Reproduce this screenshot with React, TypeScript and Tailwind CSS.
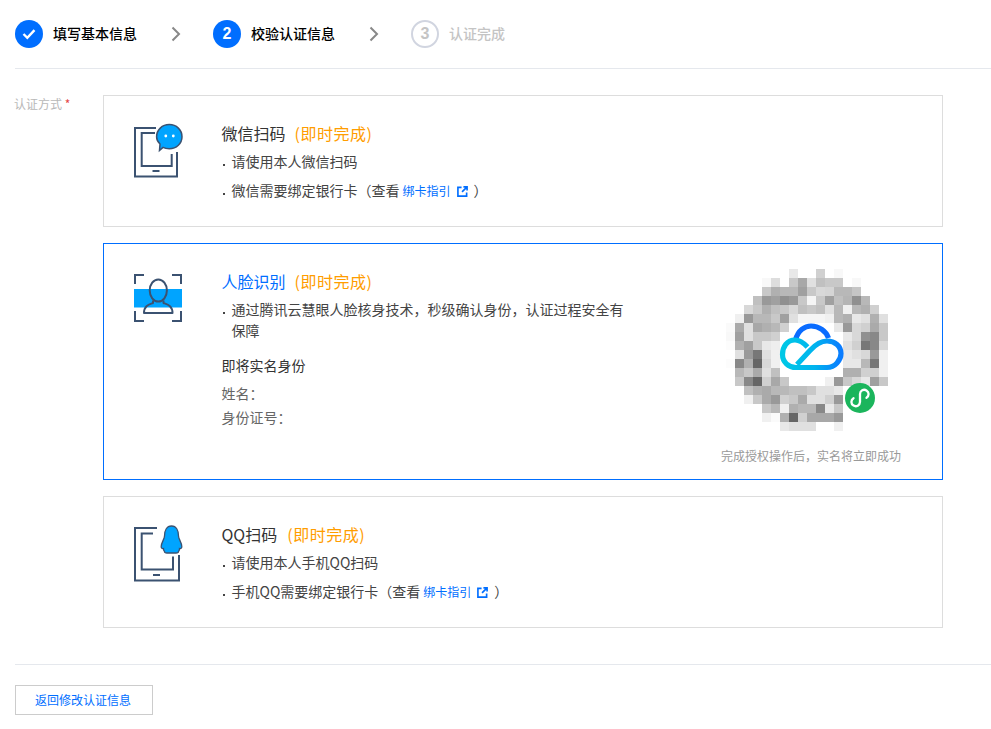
import React from "react";

const QR: string[] = [
  "-- -- -- -- -- -- -- e8 -- -- d0 -- f8 -- -- -- -- --",
  "-- -- -- -- f8 dd -- c8 a8 e0 c0 c8 c8 -- f8 -- -- --",
  "-- -- -- -- c8 b0 b8 b8 a0 c8 d8 d5 b8 b8 c5 -- -- --",
  "-- -- -- c0 99 a0 90 99 c8 f5 c8 a0 c0 b5 90 b8 -- --",
  "-- -- d8 c8 b0 c0 c8 d8 c0 c8 c0 e0 b8 f0 b8 b0 d0 --",
  "-- f0 99 b8 b8 c8 a0 e0 f5 f5 f5 f0 b8 b0 e8 e0 b0 e0",
  "fa aa e0 a8 b0 b8 d0 -- -- -- -- -- e8 99 d8 d0 aa c8",
  "f8 a0 e0 c8 c8 d0 -- -- -- -- -- -- -- e8 d8 90 88 c8",
  "fc b0 a0 c8 e8 ee -- -- -- -- -- -- -- e0 d0 77 88 d8",
  "-- e0 99 77 e0 f0 -- -- -- -- -- -- -- e8 e0 d8 99 f0",
  "fc 88 b0 66 d8 f0 -- -- -- -- -- -- -- e8 e8 b8 77 f0",
  "-- b8 c8 aa e0 c0 -- -- -- -- -- -- -- b0 b0 d0 d0 f0",
  "-- c8 88 66 d0 a8 c8 -- -- -- -- f0 99 c8 d8 e8 a0 c8",
  "-- -- c0 b0 aa b8 b8 c0 c0 c8 e0 e0 e8 -- -- -- -- --",
  "-- -- f0 c8 aa 99 d0 c8 aa e0 e0 d0 99 -- -- -- -- --",
  "-- -- -- -- c8 b8 f0 b0 b8 b8 88 e8 c8 -- -- -- -- --",
  "-- -- -- -- f0 fa b0 66 d0 a8 a8 a8 99 -- -- -- -- --",
  "-- -- -- -- -- -- e8 e0 e0 e0 -- -- f0 -- -- -- -- --",
];

function QrCode() {
  return (
    <svg viewBox="721 269 180 162" className="block w-[180px] h-[162px]">
      <defs>
        <linearGradient id="cl" x1="0" y1="0" x2="1" y2="0">
          <stop offset="0" stopColor="#00c8e6" />
          <stop offset="0.55" stopColor="#00b4ee" />
          <stop offset="1" stopColor="#0a7cff" />
        </linearGradient>
        <filter id="soft" x="-5%" y="-5%" width="110%" height="110%">
          <feGaussianBlur stdDeviation="0.7" />
        </filter>
      </defs>
      <g filter="url(#soft)">
        {QR.map((row, r) =>
          row.split(" ").map((c, k) =>
            c === "--" ? null : (
              <rect key={`${r}-${k}`} x={726 + k * 9} y={269 + r * 9} width="9" height="9" fill={`#${c}${c}${c}`} />
            ),
          ),
        )}
      </g>
      <path d="M795.5 340 C798 330 805 326 811 326 C819 326 826 331 828.5 338" fill="none" stroke="#0a6cff" strokeWidth="5.2" />
      <path
        d="M807.5 347 C802 341 799 340 795 340 C787 340 782.5 347 782.5 354.5 C782.5 362 788.5 367.5 796 367.5 H827 C835 367.5 841 360 841 353.5 C841 346 835 341 827 341 C820 341 815 345 810 350.5 L797 364.5"
        fill="none"
        stroke="url(#cl)"
        strokeWidth="5.2"
        strokeLinejoin="round"
      />
      <circle cx="860" cy="398" r="15" fill="#1bb55c" />
      <path
        d="M853.5 398.2 A4.3 4.3 0 1 0 860 402 V394 A4.3 4.3 0 1 1 866.5 397.8"
        fill="none"
        stroke="#fff"
        strokeWidth="2.3"
        strokeLinecap="round"
      />
    </svg>
  );
}

function WechatIcon() {
  return (
    <svg viewBox="134 124 50 60" className="block w-[50px] h-[60px] overflow-visible" fill="none">
      <path d="M156 128 H135 V176.5 H177 V152" stroke="#3b5271" strokeWidth="2" />
      <path d="M155 133 H141.7 V166 H171.7 V154" stroke="#3b5271" strokeWidth="2" />
      <path d="M152.5 171 H159.5" stroke="#3b5271" strokeWidth="2" />
      <path
        d="M169.3 124.6 C176.5 124.6 182 130 182 136.7 C182 143.4 176.5 148.8 169.3 148.8 C166.5 148.8 164.5 148.2 163 147.4 L159.5 150.5 L160 144 C157.6 141.8 156.6 139.4 156.6 136.7 C156.6 130 162.1 124.6 169.3 124.6 Z"
        fill="#00a4ff"
        stroke="#3b5271"
        strokeWidth="1.5"
      />
      <circle cx="165.8" cy="136" r="1.4" fill="#fff" />
      <circle cx="173.3" cy="136" r="1.4" fill="#fff" />
    </svg>
  );
}

function FaceIcon() {
  return (
    <svg viewBox="134 272 50 60" className="block w-[50px] h-[60px]" fill="none">
      <rect x="134" y="289" width="48" height="18.5" fill="#00a4ff" />
      <path d="M144 275 H135 V284 M172 275 H181 V284 M135 311 V321 H144 M181 311 V321 H172" stroke="#3b5271" strokeWidth="2" />
      <ellipse cx="158.3" cy="290.5" rx="8.6" ry="11" stroke="#3b5271" strokeWidth="2" />
      <path d="M153 300.5 V303 C149 304.5 144 305.5 144 313 H172.5 C172.5 305.5 167.5 304.5 163.5 303 V300.5" stroke="#3b5271" strokeWidth="2" strokeLinejoin="round" fill="none" />
    </svg>
  );
}

function QqIcon() {
  return (
    <svg viewBox="134 525 50 60" className="block w-[50px] h-[60px] overflow-visible" fill="none">
      <path d="M157 528 H135 V580.5 H179 V555" stroke="#3b5271" strokeWidth="2" />
      <path d="M153 533.5 H141.7 V569.5 H173 V556.5" stroke="#3b5271" strokeWidth="2" />
      <path d="M153 575 H160" stroke="#3b5271" strokeWidth="2" />
      <path
        d="M171.5 526 C176.5 526 178.5 531 178.5 536 C178.5 539 181.5 542 181.8 546.5 C182 548 180.5 549 179.5 548.5 C179.5 550 179 551 178.5 551.5 C178.5 552.5 177.5 553 176 553 H167 C165.5 553 164.5 552.5 164.5 551.5 C164 551 163.5 550 163.5 548.5 C162.5 549 161 548 161.2 546.5 C161.5 542 164.5 539 164.5 536 C164.5 531 166.5 526 171.5 526 Z"
        fill="#00a4ff"
        stroke="#3b5271"
        strokeWidth="1.3"
      />
    </svg>
  );
}

function Chevron() {
  return (
    <svg viewBox="0 0 10 16" className="w-[10px] h-[16px] ml-[34px] mr-[32px] shrink-0" fill="none">
      <path d="M1.5 1.5 L8 8 L1.5 14.5" stroke="#888888" strokeWidth="2" />
    </svg>
  );
}

function LinkIcon() {
  return (
    <svg viewBox="0 0 12 12" className="inline-block w-[11px] h-[11px] ml-[6px] align-[-1px]" fill="none">
      <path d="M5 1.5 H1 V11 H10.5 V7" stroke="#006eff" strokeWidth="1.8" />
      <path d="M7 1 H11 V5 M11 1 L5.5 6.5" stroke="#006eff" strokeWidth="1.8" />
    </svg>
  );
}

function Bullet({ children, className = "" }: { children: React.ReactNode; className?: string }) {
  return (
    <div className={`relative pl-[10px] -ml-[0.5px] text-[14px] leading-[20px] text-[#444] ${className}`}>
      <span className="absolute left-px top-[13px] w-[2px] h-[2px] bg-[#444]" />
      {children}
    </div>
  );
}

function Guide() {
  return (
    <>
      <span className="text-[12px] text-[#006eff] ml-[3px]">绑卡指引</span>
      <LinkIcon />
    </>
  );
}

function Title({ name, active, gap }: { name: string; active?: boolean; gap?: boolean }) {
  return (
    <div className="text-[16px] leading-[20px] -ml-[0.5px]">
      <span className={active ? "text-[#006eff]" : "text-[#333]"}>{name}</span>
      <span className={`text-[#ff9d00] tracking-[0.5px] ${gap ? "ml-[10px]" : "ml-[9px]"}`}>(即时完成)</span>
    </div>
  );
}

export default function App() {
  return (
    <div className="w-[991px] h-[729px] overflow-hidden bg-white pl-[15px] pt-[20px] font-['Noto_Sans_CJK_SC','Liberation_Sans',sans-serif]">
      <div className="flex items-center h-[28px]">
        <div className="w-[28px] h-[28px] rounded-full bg-[#006eff] flex items-center justify-center shrink-0">
          <svg viewBox="0 0 14 12" className="w-[14px] h-[12px]" fill="none">
            <path d="M1.5 6 L5.3 9.8 L12.5 2.2" stroke="#fff" strokeWidth="2.4" />
          </svg>
        </div>
        <span className="ml-[10px] -mt-px text-[14px] font-medium text-black w-[84px]">填写基本信息</span>
        <Chevron />
        <div className="w-[28px] h-[28px] rounded-full bg-[#006eff] flex items-center justify-center text-white text-[16px] font-bold font-['Liberation_Sans',sans-serif] shrink-0">
          2
        </div>
        <span className="ml-[10px] -mt-px text-[14px] font-medium text-black w-[84px]">校验认证信息</span>
        <Chevron />
        <div className="w-[28px] h-[28px] rounded-full border-2 border-[#d1d5e0] flex items-center justify-center text-[#c4c4c4] text-[16px] font-bold font-['Liberation_Sans',sans-serif] shrink-0">
          3
        </div>
        <span className="ml-[10px] -mt-px text-[14px] font-medium text-[#c4c4c4]">认证完成</span>
      </div>

      <div className="mt-[20px] h-px bg-[#e5e8ed]" />

      <div className="flex mt-[26px]">
        <div className="w-[88px] shrink-0 text-[12px] leading-[18px] text-[#b8b8b8] -ml-px">
          认证方式 <span className="text-[#e54545]">*</span>
        </div>
        <div className="w-[840px] flex flex-col gap-[16px] ml-px">
          <div className="h-[132px] border border-[#dddddd] flex pl-[30px]">
            <div className="w-[88px] shrink-0 pt-[28px]">
              <WechatIcon />
            </div>
            <div className="pt-[27px]">
              <Title name="微信扫码" />
              <Bullet className="mt-[8px]">请使用本人微信扫码</Bullet>
              <Bullet className="mt-[9px]">
                微信需要绑定银行卡（查看
                <Guide />
                <span className="ml-[6px]">）</span>
              </Bullet>
            </div>
          </div>

          <div className="h-[237px] border border-[#006eff] flex pl-[30px]">
            <div className="w-[88px] shrink-0 pt-[28px]">
              <FaceIcon />
            </div>
            <div className="w-[500px] shrink-0 pt-[27px]">
              <Title name="人脸识别" active />
              <div className="mt-[8px] w-[412px]">
                <Bullet className="leading-[21px]">通过腾讯云慧眼人脸核身技术，秒级确认身份，认证过程安全有保障</Bullet>
              </div>
              <div className="mt-[14px] text-[14px] leading-[20px] text-[#333] -ml-[0.5px]">即将实名身份</div>
              <div className="mt-[8px] text-[14px] leading-[20px] text-[#666] -ml-[0.5px]">姓名：</div>
              <div className="mt-[4px] text-[14px] leading-[20px] text-[#666] -ml-[0.5px]">身份证号：</div>
            </div>
            <div className="ml-[-1px] pt-[25px]">
              <QrCode />
              <div className="mt-[15px] text-[12px] leading-[20px] text-[#999] whitespace-nowrap">
                完成授权操作后，实名将立即成功
              </div>
            </div>
          </div>

          <div className="h-[132px] border border-[#dddddd] flex pl-[30px]">
            <div className="w-[88px] shrink-0 pt-[28px]">
              <QqIcon />
            </div>
            <div className="pt-[27px]">
              <Title name="QQ扫码" gap />
              <Bullet className="mt-[8px]">请使用本人手机QQ扫码</Bullet>
              <Bullet className="mt-[9px]">
                手机QQ需要绑定银行卡（查看
                <Guide />
                <span className="ml-[6px]">）</span>
              </Bullet>
            </div>
          </div>
        </div>
      </div>

      <div className="mt-[36px] h-px bg-[#e5e8ed]" />

      <button className="mt-[20px] w-[138px] h-[30px] border border-[#cccccc] bg-white text-[12px] text-[#006eff] block pr-[2px]">
        返回修改认证信息
      </button>
    </div>
  );
}
